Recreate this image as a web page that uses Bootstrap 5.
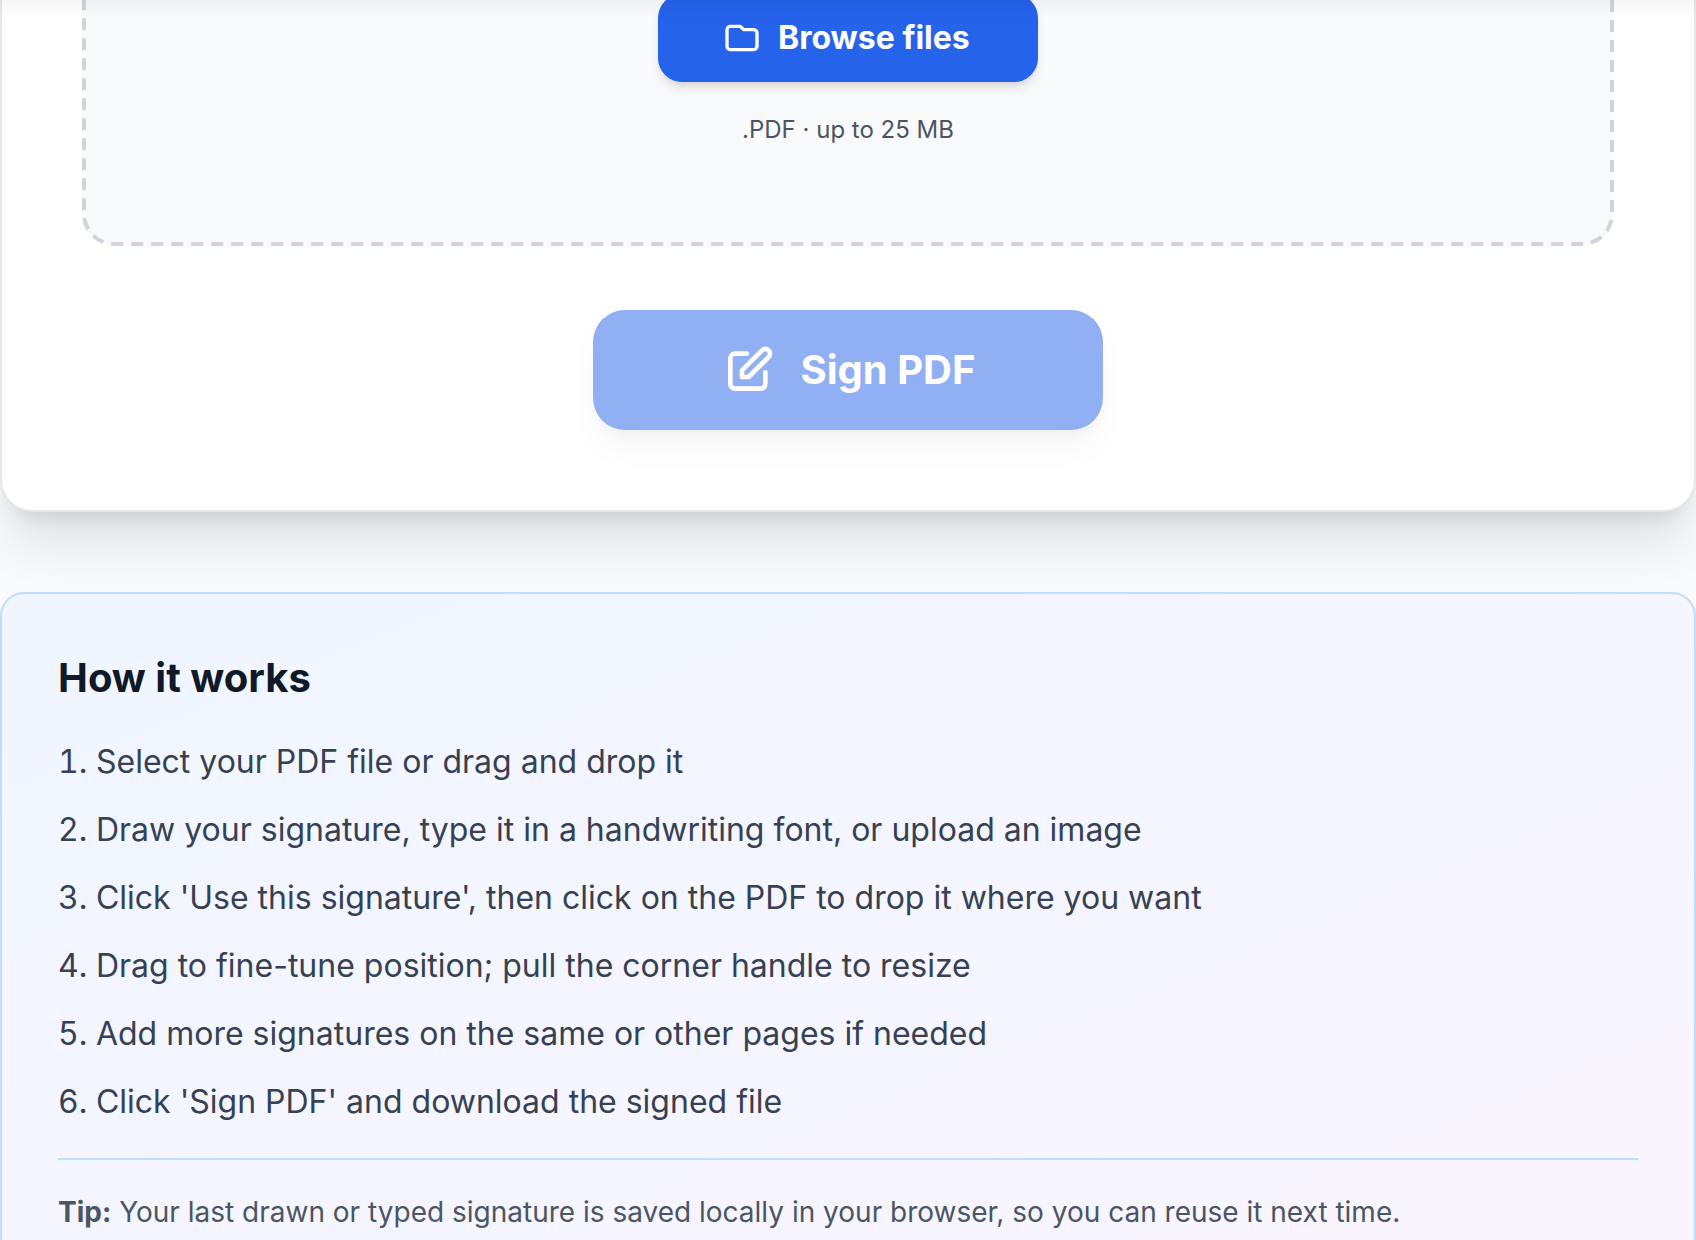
<!DOCTYPE html>
<html lang="en">
<head>
<meta charset="utf-8">
<meta name="viewport" content="width=device-width, initial-scale=1">
<title>Sign PDF</title>
<link href="https://cdn.jsdelivr.net/npm/bootstrap@5.3.0/dist/css/bootstrap.min.css" rel="stylesheet">
<style>
  body { font-family: Inter, sans-serif; background: #f9fafb; color: #111827; }
  svg.icon { fill: none; stroke: currentColor; stroke-width: 2; stroke-linecap: round; stroke-linejoin: round; flex: none; }

  /* soft shadow falling from the header above */
  .header-shade { height: 18px; background: linear-gradient(rgba(0,0,0,.035), rgba(0,0,0,0)); pointer-events: none; }

  .page-main { margin-top: -6px; gap: 80px; }
  .tool-card { border: 2px solid #e5e7eb; border-top: 0; border-radius: 0 0 32px 32px; padding: 0 80px 80px; gap: 64px;
    box-shadow: 0 40px 50px -10px rgba(0,0,0,.1), 0 16px 20px -12px rgba(0,0,0,.1); }
  .dropzone { background: #f9fafb; border-radius: 0 0 32px 32px; padding-bottom: 100px; gap: 32px; }
  .dash-frame { left: 0; top: -40px; width: 100%; height: calc(100% + 40px); pointer-events: none; }
  .dash-frame rect { x: 2px; y: 2px; width: calc(100% - 4px); height: calc(100% - 4px); rx: 30px;
    fill: none; stroke: #d1d5db; stroke-width: 4px; stroke-dasharray: 12 8; stroke-dashoffset: 11px; }

  .btn-browse, .btn-sign { --bs-btn-color: #fff; --bs-btn-bg: #2563eb; --bs-btn-hover-color: #fff; --bs-btn-hover-bg: #1d4ed8;
    --bs-btn-disabled-color: #fff; --bs-btn-disabled-bg: #2563eb; --bs-btn-disabled-opacity: .5; border: 0; }
  .btn-browse { min-width: 380px; padding: 20px 64px; gap: 16px; font-size: 32px; line-height: 48px; font-weight: 700; border-radius: 24px;
    box-shadow: 0 8px 12px -2px rgba(0,0,0,.1), 0 4px 8px -4px rgba(0,0,0,.1); }
  .btn-sign { padding: 32px 128px; gap: 24px; font-size: 40px; line-height: 56px; font-weight: 700; border-radius: 32px;
    box-shadow: 0 20px 30px -6px rgba(0,0,0,.08), 0 8px 12px -8px rgba(0,0,0,.1); }
  .file-note { font-size: 24px; line-height: 32px; color: #4b5563; }

  .how-card { border: 2px solid #bfdbfe; border-radius: 24px; padding: 56px; gap: 32px;
    background: linear-gradient(to bottom right, #eff6ff, #faf5ff); }
  .how-title { font-size: 40px; line-height: 56px; font-weight: 700; }
  .steps { list-style: decimal inside; gap: 20px; font-size: 32px; line-height: 48px; color: #374151; }
  .tip { border-top: 2px solid #bfdbfe; padding-top: 32px; font-size: 28px; line-height: 40px; color: #4b5563; }
  .tip strong { font-weight: 700; }
</style>
</head>
<body class="vh-100 overflow-hidden">
<div class="header-shade fixed-top"></div>
<main class="page-main d-flex flex-column">
  <section class="tool-card bg-white d-flex flex-column align-items-center">
    <div class="dropzone position-relative w-100 d-flex flex-column align-items-center">
      <svg class="dash-frame position-absolute" aria-hidden="true"><rect/></svg>
      <button type="button" class="btn btn-browse d-inline-flex align-items-center">
        <svg class="icon" width="40" height="40" viewBox="0 0 24 24" aria-hidden="true"><path d="M3 7v10a2 2 0 002 2h14a2 2 0 002-2V9a2 2 0 00-2-2h-6l-2-2H5a2 2 0 00-2 2z"/></svg>
        <span>Browse files</span>
      </button>
      <p class="file-note m-0">.PDF · up to 25 MB</p>
    </div>
    <button type="button" class="btn btn-sign d-inline-flex align-items-center" disabled>
      <svg class="icon" width="56" height="56" viewBox="0 0 24 24" aria-hidden="true"><path d="M11 5H6a2 2 0 00-2 2v11a2 2 0 002 2h11a2 2 0 002-2v-5m-1.414-9.414a2 2 0 112.828 2.828L11.828 15H9v-2.828l8.586-8.586z"/></svg>
      <span>Sign PDF</span>
    </button>
  </section>

  <section class="how-card d-flex flex-column">
    <h2 class="how-title m-0">How it works</h2>
    <ol class="steps d-flex flex-column m-0 p-0">
      <li>Select your PDF file or drag and drop it</li>
      <li>Draw your signature, type it in a handwriting font, or upload an image</li>
      <li>Click 'Use this signature', then click on the PDF to drop it where you want</li>
      <li>Drag to fine-tune position; pull the corner handle to resize</li>
      <li>Add more signatures on the same or other pages if needed</li>
      <li>Click 'Sign PDF' and download the signed file</li>
    </ol>
    <p class="tip m-0"><strong>Tip:</strong> Your last drawn or typed signature is saved locally in your browser, so you can reuse it next time.</p>
  </section>
</main>
<script src="https://cdn.jsdelivr.net/npm/bootstrap@5.3.0/dist/js/bootstrap.bundle.min.js"></script>
</body>
</html>
